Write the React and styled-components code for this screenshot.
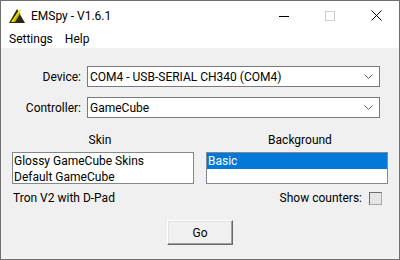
import styled, { createGlobalStyle } from 'styled-components';

const GlobalStyle = createGlobalStyle`
    html, body {
        margin: 0;
        padding: 0;
        background: #ffffff;
    }
    * {
        box-sizing: border-box;
    }
`;

const App = () => {
    return (
        <>
            <GlobalStyle />
            <Window>
                <TitleBar>
                    <AppIcon width="18" height="16" viewBox="0 0 18 16">
                        <polygon points="9,1 17,15 1,15" fill="#2a2a10" />
                        <polygon points="11,2 13,2 6,14 3,14" fill="#f2e600" />
                        <polygon points="9,7 12,6 7,14 5,14" fill="#c8b800" />
                    </AppIcon>
                    <Title>EMSpy - V1.6.1</Title>
                    <Controls>
                        <CtrlButton>
                            <svg width="10" height="10" viewBox="0 0 10 10">
                                <line x1="0" y1="5.5" x2="10" y2="5.5" stroke="#000" strokeWidth="1" />
                            </svg>
                        </CtrlButton>
                        <CtrlButton>
                            <svg width="10" height="10" viewBox="0 0 10 10">
                                <rect x="0.5" y="0.5" width="9" height="9" fill="none" stroke="#cccccc" strokeWidth="1" />
                            </svg>
                        </CtrlButton>
                        <CtrlButton>
                            <svg width="11" height="11" viewBox="0 0 11 11">
                                <line x1="0.5" y1="0.5" x2="10.5" y2="10.5" stroke="#000" strokeWidth="1" />
                                <line x1="10.5" y1="0.5" x2="0.5" y2="10.5" stroke="#000" strokeWidth="1" />
                            </svg>
                        </CtrlButton>
                    </Controls>
                </TitleBar>
                <MenuBar>
                    <MenuItem>Settings</MenuItem>
                    <MenuItem>Help</MenuItem>
                </MenuBar>
                <Body>
                    <FieldRow>
                        <FieldLabel>Device:</FieldLabel>
                        <Combo>
                            <span>COM4 - USB-SERIAL CH340 (COM4)</span>
                            <Chevron />
                        </Combo>
                    </FieldRow>
                    <FieldRow $gap={10}>
                        <FieldLabel>Controller:</FieldLabel>
                        <Combo>
                            <span>GameCube</span>
                            <Chevron />
                        </Combo>
                    </FieldRow>
                    <Columns>
                        <Column>
                            <Header $shift={-3}>Skin</Header>
                            <ListBox>
                                <ListItem>Glossy GameCube Skins</ListItem>
                                <ListItem>Default GameCube</ListItem>
                            </ListBox>
                        </Column>
                        <Column>
                            <Header $shift={3}>Background</Header>
                            <ListBox>
                                <ListItem $selected>Basic</ListItem>
                            </ListBox>
                        </Column>
                    </Columns>
                    <BottomRow>
                        <span>Tron V2 with D-Pad</span>
                        <CounterToggle>
                            <span>Show counters:</span>
                            <CheckBox />
                        </CounterToggle>
                    </BottomRow>
                    <ButtonRow>
                        <GoButton>Go</GoButton>
                    </ButtonRow>
                </Body>
            </Window>
        </>
    );
};

const Chevron = () => (
    <ChevronSvg width="9" height="5" viewBox="0 0 9 5">
        <polyline points="0.5,0.5 4.5,4.5 8.5,0.5" fill="none" stroke="#606060" strokeWidth="1" />
    </ChevronSvg>
);

export default App;

const Window = styled.div`
    width: 400px;
    height: 260px;
    border: 1px solid #707070;
    display: flex;
    flex-direction: column;
    font-family: Roboto, "Noto Sans", sans-serif;
    font-size: 12px;
    color: #000;
    overflow: hidden;
`;

const TitleBar = styled.div`
    height: 29px;
    background: #fff;
    display: flex;
    align-items: center;
    padding-left: 7px;
`;

const AppIcon = styled.svg`
    flex: none;
    margin-top: 1px;
`;

const Title = styled.div`
    margin-left: 5px;
    font-size: 12px;
`;

const Controls = styled.div`
    margin-left: auto;
    display: flex;
    height: 100%;
`;

const CtrlButton = styled.div`
    width: 46px;
    height: 100%;
    display: flex;
    align-items: center;
    justify-content: center;
`;

const MenuBar = styled.div`
    height: 18px;
    background: #fff;
    display: flex;
    align-items: center;
    padding-left: 2px;
`;

const MenuItem = styled.div`
    padding: 0 6px;
    line-height: 18px;
`;

const Body = styled.div`
    flex: 1;
    background: #f0f0f0;
    padding: 18px 11px 0 11px;
    display: flex;
    flex-direction: column;
`;

const FieldRow = styled.div`
    display: flex;
    align-items: center;
    margin-top: ${(p) => p.$gap || 0}px;
`;

const FieldLabel = styled.div`
    width: 69px;
    text-align: right;
    margin-right: 6px;
`;

const Combo = styled.div`
    width: 293px;
    height: 21px;
    background: #fff;
    border: 1px solid #7a7a7a;
    display: flex;
    align-items: center;
    padding-left: 2px;
    padding-right: 6px;
    white-space: nowrap;
`;

const ChevronSvg = styled.svg`
    margin-left: auto;
`;

const Columns = styled.div`
    display: flex;
    gap: 12px;
    margin-top: 14px;
`;

const Column = styled.div`
    flex: 1;
    display: flex;
    flex-direction: column;
`;

const Header = styled.div`
    height: 16px;
    line-height: 16px;
    text-align: center;
    transform: translateX(${(p) => p.$shift}px);
    margin-bottom: 4px;
`;

const ListBox = styled.div`
    height: 32px;
    background: #fff;
    border: 1px solid #828790;
    overflow: hidden;
`;

const ListItem = styled.div`
    height: 16px;
    line-height: 16px;
    padding-left: 1px;
    white-space: nowrap;
    background: ${(p) => (p.$selected ? '#0078d7' : 'transparent')};
    color: ${(p) => (p.$selected ? '#fff' : '#000')};
`;

const BottomRow = styled.div`
    display: flex;
    align-items: center;
    justify-content: space-between;
    height: 16px;
    margin-top: 6px;
    padding-left: 1px;
`;

const CounterToggle = styled.div`
    display: flex;
    align-items: center;
    gap: 7px;
    margin-right: 6px;
`;

const CheckBox = styled.div`
    width: 13px;
    height: 13px;
    border: 1px solid #6d6d6d;
    border-right-color: #a8a8a8;
    border-bottom-color: #a8a8a8;
    background: #e6e6e6;
`;

const ButtonRow = styled.div`
    display: flex;
    justify-content: center;
    margin-top: 14px;
`;

const GoButton = styled.div`
    width: 66px;
    height: 25px;
    display: flex;
    align-items: center;
    justify-content: center;
    background: #f0f0f0;
    border-top: 1px solid #ffffff;
    border-left: 1px solid #ffffff;
    border-right: 1px solid #696969;
    border-bottom: 1px solid #696969;
    box-shadow: inset -1px -1px 0 #a0a0a0, inset 1px 1px 0 #e3e3e3;
`;
